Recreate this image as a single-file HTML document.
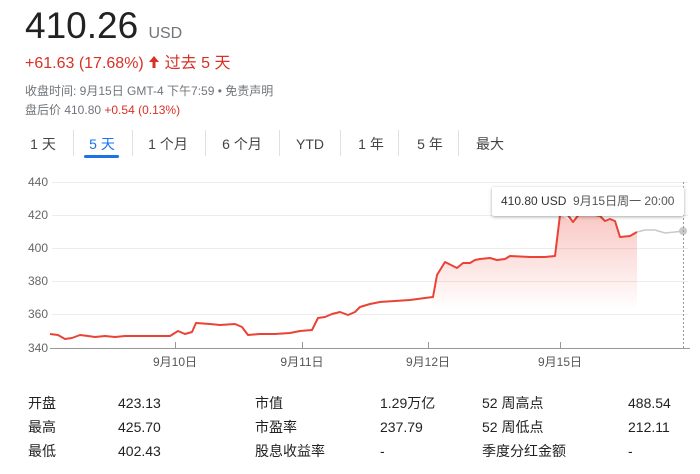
<!DOCTYPE html>
<html><head><meta charset="utf-8"><style>
body{margin:0;width:700px;height:474px;background:#fff;font-family:"Liberation Sans","Noto Sans CJK SC",sans-serif;position:relative;overflow:hidden;color:#222}
.a{position:absolute;white-space:nowrap}
.tab{position:absolute;top:134px;font-size:14px;line-height:20px;color:#444;transform:translateX(-50%)}
.div{position:absolute;top:130px;width:1px;height:26px;background:#e0e0e0}
.yl{position:absolute;left:0;width:48px;text-align:right;font-size:12px;color:#666}
.xl{position:absolute;top:353px;font-size:12px;color:#555;transform:translateX(-50%)}
.t{position:absolute;font-size:14px;color:#222;height:20px;line-height:20px}
</style></head><body>
<div class="a" style="left:25px;top:6px;font-size:37px;color:#222;line-height:40px">410.26 <span style="font-size:16px;color:#70757a">USD</span></div>
<div class="a" style="left:25px;top:54px;font-size:16px;line-height:20px;color:#d93025">+61.63 (17.68%) <svg width="12" height="14" viewBox="0 0 12 14" style="vertical-align:-1px"><path d="M6 1 L1 7 H4.5 V13 H7.5 V7 H11 Z" fill="#d93025"/></svg> 过去 5 天</div>
<div class="a" style="left:25px;top:82px;font-size:12px;color:#70757a">收盘时间: 9月15日 GMT-4 下午7:59 • 免责声明</div>
<div class="a" style="left:25px;top:101px;font-size:12px;color:#70757a">盘后价 410.80 <span style="color:#d93025">+0.54 (0.13%)</span></div>

<div class="tab" style="left:43px">1 天</div>
<div class="div" style="left:73px"></div>
<div class="tab" style="left:102px;color:#1a73e8">5 天</div>
<div class="a" style="left:84px;top:155px;width:35px;height:3px;border-radius:2px;background:#1a73e8"></div>
<div class="div" style="left:132px"></div>
<div class="tab" style="left:168px">1 个月</div>
<div class="div" style="left:205px"></div>
<div class="tab" style="left:242px">6 个月</div>
<div class="div" style="left:279px"></div>
<div class="tab" style="left:310px">YTD</div>
<div class="div" style="left:340px"></div>
<div class="tab" style="left:371px">1 年</div>
<div class="div" style="left:398px"></div>
<div class="tab" style="left:430px">5 年</div>
<div class="div" style="left:458px"></div>
<div class="tab" style="left:490px">最大</div>

<div class="yl" style="top:175px">440</div>
<div class="yl" style="top:208px">420</div>
<div class="yl" style="top:241px">400</div>
<div class="yl" style="top:274px">380</div>
<div class="yl" style="top:307px">360</div>
<div class="yl" style="top:341px">340</div>

<svg class="a" style="left:0;top:0" width="700" height="474">
<defs><linearGradient id="g" x1="0" y1="0" x2="0" y2="1"><stop offset="0" stop-color="#ea4335" stop-opacity=".3"/><stop offset="1" stop-color="#ea4335" stop-opacity="0"/></linearGradient></defs>
<g stroke="#ececec" stroke-width="1">
<line x1="52" y1="182.5" x2="688" y2="182.5"/><line x1="52" y1="215.5" x2="688" y2="215.5"/><line x1="52" y1="248.5" x2="688" y2="248.5"/><line x1="52" y1="281.5" x2="688" y2="281.5"/><line x1="52" y1="314.5" x2="688" y2="314.5"/></g>
<polygon fill="url(#g)" points="433,297 437,275 445,262 457,268 463,263 470,263 475,260 480,259 490,258 497,260 505,259 510,256 530,257 545,257 555,256 560,215 573,222 580,213 590,214 600,216 605,221 610,219 615,221 620,237 630,236 637,232 637,310 433,310"/>
<polyline fill="none" stroke="#ea4335" stroke-width="2" stroke-linejoin="round" points="50,334 58,335 65,339 72,338 80,335 88,336 95,337 105,336 115,337 125,336 140,336 155,336 170,336 178,331 185,334 192,332 196,323 210,324 220,325 235,324 242,327 248,335 260,334 275,334 290,333 300,331 312,330 318,318 325,317 332,314 340,312 348,315 355,312 360,307 370,304 380,302 395,301 410,300 425,298 433,297 437,275 445,262 457,268 463,263 470,263 475,260 480,259 490,258 497,260 505,259 510,256 530,257 545,257 555,256 560,215 567,214 573,222 580,213 590,214 600,216 605,221 610,219 615,221 620,237 630,236 637,232"/>
<polyline fill="none" stroke="#c8c8c8" stroke-width="1.5" points="637,232 645,230 655,230 665,233 675,232 683,231"/>
<circle cx="683" cy="231" r="4" fill="#c8c8c8"/>
<line x1="683.5" y1="182" x2="683.5" y2="348" stroke="#999" stroke-dasharray="2,2"/>
<line x1="50" y1="348.5" x2="690" y2="348.5" stroke="#999"/>
<g stroke="#999"><line x1="175.5" y1="342" x2="175.5" y2="349"/><line x1="302.5" y1="342" x2="302.5" y2="349"/><line x1="428.5" y1="342" x2="428.5" y2="349"/><line x1="560.5" y1="342" x2="560.5" y2="349"/></g>
</svg>
<div class="xl" style="left:175px">9月10日</div>
<div class="xl" style="left:302px">9月11日</div>
<div class="xl" style="left:428px">9月12日</div>
<div class="xl" style="left:560px">9月15日</div>

<div class="a" style="left:492px;top:187px;width:192px;height:29px;background:#fff;box-shadow:0 1px 3px rgba(0,0,0,.35);border-radius:2px;font-size:12px;line-height:29px;color:#333;text-indent:9px">410.80 USD&nbsp; <span style="color:#555">9月15日周一 20:00</span></div>

<div class="t" style="left:28px;top:393px">开盘</div><div class="t" style="left:118px;top:393px">423.13</div>
<div class="t" style="left:255px;top:393px">市值</div><div class="t" style="left:380px;top:393px">1.29万亿</div>
<div class="t" style="left:482px;top:393px">52 周高点</div><div class="t" style="left:628px;top:393px">488.54</div>
<div class="t" style="left:28px;top:417px">最高</div><div class="t" style="left:118px;top:417px">425.70</div>
<div class="t" style="left:255px;top:417px">市盈率</div><div class="t" style="left:380px;top:417px">237.79</div>
<div class="t" style="left:482px;top:417px">52 周低点</div><div class="t" style="left:628px;top:417px">212.11</div>
<div class="t" style="left:28px;top:441px">最低</div><div class="t" style="left:118px;top:441px">402.43</div>
<div class="t" style="left:255px;top:441px">股息收益率</div><div class="t" style="left:380px;top:441px">-</div>
<div class="t" style="left:482px;top:441px">季度分红金额</div><div class="t" style="left:628px;top:441px">-</div>
</body></html>
